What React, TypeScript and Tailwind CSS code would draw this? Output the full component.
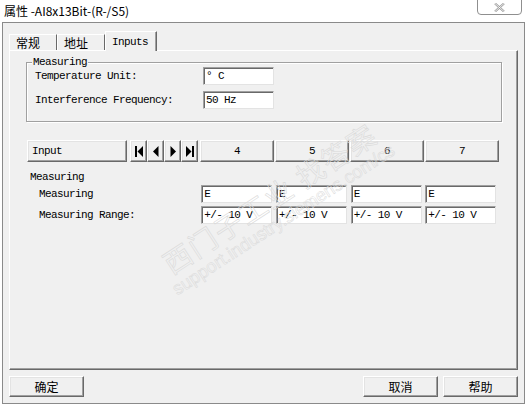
import React from 'react';

const MONO = "font-['Liberation_Mono',monospace] text-[11px] tracking-[-0.6px] text-black";
const CJK = "font-['Noto_Sans_CJK_SC',sans-serif] text-[12px] text-black";

const btn3d =
    'bg-[#f0f0f0] border border-t-white border-l-white border-r-[#696969] border-b-[#696969] shadow-[inset_-1px_-1px_0_#a0a0a0,inset_1px_1px_0_#e3e3e3]';
const field =
    'bg-white border border-t-[#a0a0a0] border-l-[#a0a0a0] border-r-[#e3e3e3] border-b-[#e3e3e3] shadow-[inset_1px_1px_0_#696969]';

const COLS = ['4', '5', '6', '7'];

const NavIcon: React.FC<{ kind: 'first' | 'prev' | 'next' | 'last' }> = ({ kind }) => (
    <svg width="10" height="11" viewBox="0 0 10 11">
        {kind === 'first' && (
            <>
                <rect x="1" y="0" width="2" height="11" fill="#000" />
                <polygon points="9,0 9,11 3.5,5.5" fill="#000" />
            </>
        )}
        {kind === 'prev' && <polygon points="7.5,0 7.5,11 2,5.5" fill="#000" />}
        {kind === 'next' && <polygon points="2.5,0 2.5,11 8,5.5" fill="#000" />}
        {kind === 'last' && (
            <>
                <polygon points="1,0 1,11 6.5,5.5" fill="#000" />
                <rect x="7" y="0" width="2" height="11" fill="#000" />
            </>
        )}
    </svg>
);

const Field: React.FC<{ value: string; w?: string }> = ({ value, w = 'w-[71px]' }) => (
    <div className={`${field} ${w} h-[18px] flex items-center pl-[2px] ${MONO}`}>{value}</div>
);

const App: React.FC = () => {
    return (
        <div className="relative w-[527px] h-[406px] bg-white overflow-hidden">
            {/* title bar */}
            <div className="h-[22px] flex justify-between items-start">
                <div className={`pl-[4px] pt-[2px] ${CJK} leading-[18px]`}>属性 -AI8x13Bit-(R-/S5)</div>
                <div className="mr-[5px] -mt-px w-[45px] h-[16px] border border-[#8f8f8f] rounded-b-[4px] bg-white flex items-center justify-center">
                    <svg width="11" height="9" viewBox="0 0 11 9">
                        <path d="M1 0.5 L10 8.5 M10 0.5 L1 8.5" stroke="#9a9a9a" strokeWidth="2.2" />
                        <path d="M1 0.5 L10 8.5 M10 0.5 L1 8.5" stroke="#fff" strokeWidth="0.8" />
                    </svg>
                </div>
            </div>

            {/* window body */}
            <div className="ml-[2px] w-[523px] h-[382px] border border-[#8a8a8a] bg-[#f0f0f0] flex flex-col">
                {/* tabs */}
                <div className="h-[27px] flex items-end pl-[6px]">
                    <div className={`w-[48px] h-[16px] border-t border-l border-white border-r border-r-[#696969] pl-[6px] ${CJK} leading-[15px]`}>常规</div>
                    <div className={`w-[48px] h-[16px] border-t border-l border-white border-r border-r-[#696969] pl-[6px] ${CJK} leading-[15px]`}>地址</div>
                    <div className={`relative z-10 -mb-px w-[52px] h-[20px] bg-[#f0f0f0] border-t border-l border-white border-r border-r-[#696969] shadow-[inset_-1px_0_0_#a0a0a0] pl-[6px] pt-[2px] ${MONO}`}>Inputs</div>
                </div>

                {/* tab panel */}
                <div className="ml-[6px] w-[509px] h-[320px] border border-t-white border-l-white border-r-[#696969] border-b-[#696969] shadow-[inset_-1px_-1px_0_#a0a0a0] px-[17px] pt-[11px]">
                    {/* group box */}
                    <div className="relative ml-[-1px] w-[476px] h-[60px] border border-[#a0a0a0] shadow-[inset_1px_1px_0_#fff,1px_1px_0_#fff] pt-[4px]">
                        <div className={`absolute left-[5px] -top-[7px] bg-[#f0f0f0] px-[1px] leading-[12px] ${MONO}`}>Measuring</div>
                        <div className="flex items-center h-[18px]">
                            <div className={`w-[176px] pl-[8px] ${MONO}`}>Temperature Unit:</div>
                            <Field value="° C" />
                        </div>
                        <div className="flex items-center h-[18px] mt-[6px]">
                            <div className={`w-[176px] pl-[8px] ${MONO}`}>Interference Frequency:</div>
                            <Field value="50 Hz" />
                        </div>
                    </div>

                    {/* navigation row */}
                    <div className="mt-[18px] flex h-[22px]">
                        <div className={`${btn3d} w-[100px] flex items-center pl-[4px] ${MONO}`}>Input</div>
                        <div className="w-[73px] flex pl-[3px]">
                            {(['first', 'prev', 'next', 'last'] as const).map((k) => (
                                <div key={k} className={`${btn3d} w-[17px] flex items-center justify-center`}>
                                    <NavIcon kind={k} />
                                </div>
                            ))}
                        </div>
                        {COLS.map((c) => (
                            <div key={c} className={`${btn3d} w-[74px] mr-px flex items-center justify-center ${MONO}`}>{c}</div>
                        ))}
                    </div>

                    {/* measuring section */}
                    <div className={`mt-[8px] pl-[3px] leading-[14px] ${MONO}`}>Measuring</div>
                    <div className="mt-[1px] flex items-center h-[18px]">
                        <div className={`w-[175px] pl-[12px] ${MONO}`}>Measuring</div>
                        {COLS.map((c) => (
                            <div key={c} className="w-[75px]">
                                <Field value="E" />
                            </div>
                        ))}
                    </div>
                    <div className="mt-[3px] flex items-center h-[18px]">
                        <div className={`w-[175px] pl-[12px] ${MONO}`}>Measuring Range:</div>
                        {COLS.map((c) => (
                            <div key={c} className="w-[75px]">
                                <Field value="+/- 10 V" />
                            </div>
                        ))}
                    </div>
                </div>

                {/* dialog buttons */}
                <div className="mt-[6px] flex px-[6px]">
                    <div className={`${btn3d} w-[75px] h-[21px] flex items-center justify-center ${CJK}`}>确定</div>
                    <div className="flex-1" />
                    <div className={`${btn3d} w-[75px] h-[21px] flex items-center justify-center ${CJK}`}>取消</div>
                    <div className={`${btn3d} ml-[5px] w-[75px] h-[21px] flex items-center justify-center ${CJK}`}>帮助</div>
                </div>
            </div>

            {/* faint watermark over the dialog */}
            <div className="pointer-events-none absolute left-[115px] top-[182px] w-[320px] -rotate-[33deg] flex flex-col items-center leading-none">
                <div className="font-['Noto_Sans_CJK_SC',sans-serif] text-[28px] tracking-[2px] text-transparent [-webkit-text-stroke:0.6px_#dadada]">西门子工业 找答案</div>
                <div className="mt-[3px] font-['Liberation_Sans',sans-serif] text-[18px] text-transparent [-webkit-text-stroke:0.5px_#dadada]">support.industry.siemens.com/cs</div>
            </div>
        </div>
    );
};

export default App;
